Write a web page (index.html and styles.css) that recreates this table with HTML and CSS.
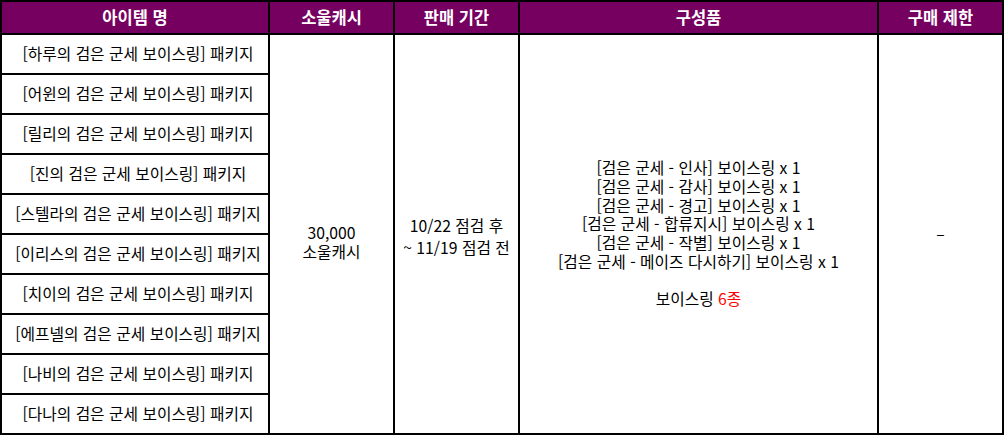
FILE: index.html
```html
<!DOCTYPE html>
<html lang="ko">
<head>
<meta charset="utf-8">
<title>패키지</title>
<link rel="stylesheet" href="styles.css">
</head>
<body>
<div class="grid">
  <div class="hd">아이템 명</div>
  <div class="hd">소울캐시</div>
  <div class="hd">판매 기간</div>
  <div class="hd">구성품</div>
  <div class="hd">구매 제한</div>

  <div class="cell name">[하루의 검은 군세 보이스링] 패키지</div>
  <div class="cell span price"><div>30,000<br>소울캐시</div></div>
  <div class="cell span period"><div class="period-l">10/22 점검 후</div><div class="period-l">~ 11/19 점검 전</div></div>
  <div class="cell span items"><div>[검은 군세 - 인사] 보이스링 x 1<br>[검은 군세 - 감사] 보이스링 x 1<br>[검은 군세 - 경고] 보이스링 x 1<br>[검은 군세 - 합류지시] 보이스링 x 1<br>[검은 군세 - 작별] 보이스링 x 1<br>[검은 군세 - 메이즈 다시하기] 보이스링 x 1<br><br>보이스링 <span class="red">6종</span></div></div>
  <div class="cell span limit">–</div>

  <div class="cell name">[어윈의 검은 군세 보이스링] 패키지</div>
  <div class="cell name">[릴리의 검은 군세 보이스링] 패키지</div>
  <div class="cell name">[진의 검은 군세 보이스링] 패키지</div>
  <div class="cell name">[스텔라의 검은 군세 보이스링] 패키지</div>
  <div class="cell name">[이리스의 검은 군세 보이스링] 패키지</div>
  <div class="cell name">[치이의 검은 군세 보이스링] 패키지</div>
  <div class="cell name">[에프넬의 검은 군세 보이스링] 패키지</div>
  <div class="cell name">[나비의 검은 군세 보이스링] 패키지</div>
  <div class="cell name">[다나의 검은 군세 보이스링] 패키지</div>
</div>
</body>
</html>
```

FILE: styles.css
```css
html, body {
  margin: 0;
  padding: 0;
  background: #ffffff;
}

body {
  font-family: "Noto Sans CJK KR", "Noto Sans", sans-serif;
  font-size: 15.75px;
  line-height: 18.7px;
  color: #000000;
}

.grid {
  display: grid;
  width: 1000px;
  grid-template-columns: 266px 123px 123px 357px 123px;
  grid-template-rows: 31px repeat(10, 38px);
  gap: 2px;
  padding: 2px;
  background: #000000;
}

.hd {
  background: #760060;
  color: #ffffff;
  font-weight: bold;
  font-size: 16.5px;
  display: flex;
  align-items: center;
  justify-content: center;
}

.cell {
  background: #ffffff;
  display: flex;
  flex-direction: column;
  align-items: center;
  justify-content: center;
  text-align: center;
}

.name {
  grid-column: 1;
  padding-left: 6px;
}

.span {
  grid-row: 2 / span 10;
}

.price {
  grid-column: 2;
  padding-top: 18px;
}

.period {
  grid-column: 3;
  padding-top: 6px;
}

.period-l {
  line-height: 22px;
}

.items {
  grid-column: 4;
}

.limit {
  grid-column: 5;
}

.red {
  color: #ff0000;
}
```
